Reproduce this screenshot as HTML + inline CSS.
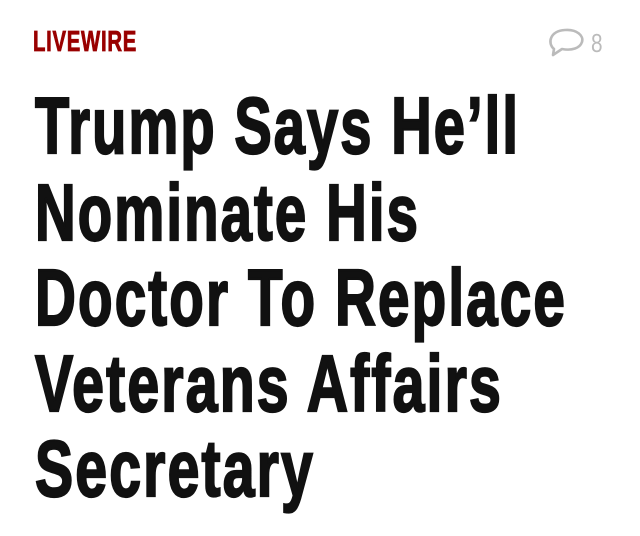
<!DOCTYPE html>
<html><head><meta charset="utf-8"><style>
html,body{margin:0;padding:0;background:#fff;width:640px;height:536px;overflow:hidden;position:relative}
.l{position:absolute;left:35px;font-family:"Liberation Sans Narrow","Liberation Sans",sans-serif;font-weight:bold;font-size:80px;line-height:80px;color:#111;white-space:nowrap;transform-origin:0 0;letter-spacing:3px;-webkit-text-stroke:2.2px #111}
.k{position:absolute;left:33px;top:28px;font-family:"Liberation Sans Narrow","Liberation Sans",sans-serif;font-weight:bold;font-size:29px;line-height:29px;color:#990000;white-space:nowrap;transform-origin:0 0;letter-spacing:1px;-webkit-text-stroke:0.8px #990000}
.n{position:absolute;left:591px;top:29px;font-family:"Liberation Sans",sans-serif;font-size:26px;line-height:29px;color:#bbb;transform:scaleX(0.8);transform-origin:0 0}
</style></head><body>
<div class="k" data-w="104">LIVEWIRE</div>
<svg style="position:absolute;left:545px;top:27px" width="42" height="32" viewBox="0 0 42 32"><path d="M9 22 C2 16 5 4 20 3 C32 2 39 9 37 15 C35 21 27 24 17 22 L8 28 Z" fill="none" stroke="#bbb" stroke-width="2.6" stroke-linejoin="round"/></svg>
<div class="n">8</div>
<div class="l" style="top:86px" data-w="485">Trump Says He’ll</div>
<div class="l" style="top:173px" data-w="385">Nominate His</div>
<div class="l" style="top:258px" data-w="532">Doctor To Replace</div>
<div class="l" style="top:344px" data-w="468">Veterans Affairs</div>
<div class="l" style="top:429px" data-w="280">Secretary</div>
<script>
document.querySelectorAll('[data-w]').forEach(function(e){var w=e.getBoundingClientRect().width;e.style.transform='scaleX('+(parseFloat(e.dataset.w)/w)+')';});
</script>
</body></html>
